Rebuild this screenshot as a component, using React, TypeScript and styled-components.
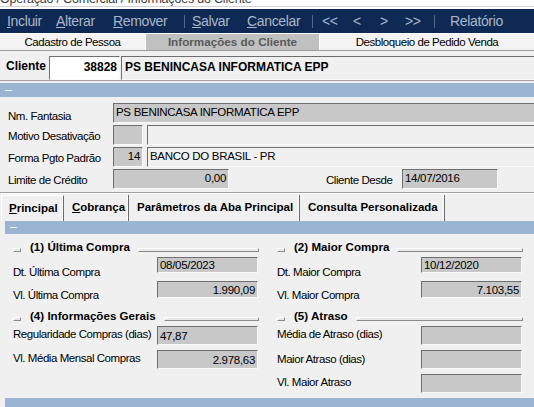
import React from 'react';
import styled, { createGlobalStyle } from 'styled-components';

const sans = `'Liberation Sans', Arial, sans-serif`;

const GlobalStyle = createGlobalStyle`
  html, body {
    margin: 0;
    padding: 0;
  }

  body {
    background: #f0f0f0;
    font-family: ${sans};
    color: #000;
  }

  * {
    box-sizing: border-box;
  }
`;

const Window = styled.div`
  width: 534px;
  height: 407px;
  overflow: hidden;
  display: flex;
  flex-direction: column;
  background: #f0f0f0;
`;

const TitleBar = styled.div`
  background: #fff;
  padding-bottom: 2px;
`;

const TitleText = styled.div`
  height: 7px;
  overflow: hidden;
  border-bottom: 1px solid #d4d4d4;

  span {
    display: block;
    margin-top: -8px;
    font-size: 12.5px;
    line-height: 14px;
    letter-spacing: -0.2px;
    color: #3c3c3c;
    white-space: nowrap;
  }
`;

const Toolbar = styled.div`
  height: 24px;
  flex-shrink: 0;
  display: flex;
  align-items: center;
  padding-left: 7px;
  background: #0e2a54;
`;

const ToolButton = styled.div<{ $w: number }>`
  width: ${(p) => p.$w}px;
  flex-shrink: 0;
  font-size: 14px;
  letter-spacing: -0.35px;
  line-height: 24px;
  color: #a9b6c9;
  white-space: nowrap;

  u {
    text-decoration-thickness: 1px;
    text-underline-offset: 1px;
  }
`;

const ToolSep = styled.div<{ $w: number }>`
  width: ${(p) => p.$w}px;
  flex-shrink: 0;
  height: 13px;

  &::before {
    content: '';
    display: block;
    width: 1px;
    height: 100%;
    background: #51668a;
  }
`;

const PageTabs = styled.div`
  display: flex;
  flex-shrink: 0;
  height: 18px;
  border-top: 1px solid #fff;
  border-bottom: 1px solid #9c9c9c;
  background: #f3f3f3;
`;

const PageTab = styled.div<{ $w: number; $active?: boolean }>`
  width: ${(p) => p.$w}px;
  flex-shrink: 0;
  text-align: center;
  white-space: nowrap;
  line-height: 16px;
  font-size: ${(p) => (p.$active ? '11.7px' : '11.5px')};
  letter-spacing: ${(p) => (p.$active ? '0' : '-0.45px')};
  font-weight: ${(p) => (p.$active ? 700 : 400)};
  color: ${(p) => (p.$active ? '#5a5a5a' : '#000')};
  background: ${(p) => (p.$active ? '#c0c0c0' : 'transparent')};
  border-left: ${(p) => (p.$active ? '1px solid #fff' : 'none')};
  border-right: ${(p) => (p.$active ? '1px solid #fff' : 'none')};
`;

const ClientRow = styled.div`
  display: flex;
  flex-shrink: 0;
  height: 30px;
  padding: 5px 0 0 6px;
  border-bottom: 1px solid #a0a0a0;
  margin-bottom: 2px;
  overflow: hidden;
`;

const ClientLabel = styled.div`
  width: 43px;
  font-weight: 700;
  font-size: 12px;
  line-height: 20px;
`;

const Field = styled.div<{
  $w?: number;
  $h?: number;
  $light?: boolean;
  $white?: boolean;
  $right?: boolean;
  $gap?: number;
}>`
  ${(p) => (p.$w ? `width: ${p.$w}px; flex-shrink: 0;` : 'flex: 1; margin-right: -3px;')}
  height: ${(p) => p.$h ?? 20}px;
  margin-left: ${(p) => p.$gap ?? 0}px;
  display: flex;
  align-items: center;
  justify-content: ${(p) => (p.$right ? 'flex-end' : 'flex-start')};
  padding: 0 2px;
  background: ${(p) => (p.$white ? '#fff' : p.$light ? '#f0f0f0' : '#c8c8c8')};
  border: 1px solid;
  border-color: #6e6e6e #fafafa #fafafa #6e6e6e;
  font-size: 11.5px;
  letter-spacing: -0.3px;
  white-space: nowrap;
  overflow: hidden;
`;

const BoldField = styled(Field)`
  font-weight: 700;
  font-size: 12px;
  letter-spacing: 0;
  padding: 0 2px 3px 3px;
`;

const FormField = styled(Field)`
  padding-bottom: 2px;
`;

const BlueBar = styled.div<{ $h: number }>`
  height: ${(p) => p.$h}px;
  flex-shrink: 0;
  background: #9bb4d2;
  color: #fff;
  font-size: 12px;
  line-height: ${(p) => p.$h}px;
  padding-left: 5px;
`;

const Form = styled.div`
  display: flex;
  flex-direction: column;
  gap: 2px;
  flex-shrink: 0;
  padding: 6px 0 3px 8px;
  border-bottom: 1px solid #a0a0a0;
  overflow: hidden;
`;

const FormRow = styled.div`
  display: flex;
  height: 20px;
`;

const Label = styled.div<{ $w: number; $dy: number; $gap?: number }>`
  width: ${(p) => p.$w}px;
  flex-shrink: 0;
  margin-left: ${(p) => p.$gap ?? 0}px;
  padding-top: ${(p) => p.$dy}px;
  font-size: 11.5px;
  letter-spacing: -0.45px;
  line-height: 16px;
  white-space: nowrap;
`;

const TabStrip = styled.div`
  display: flex;
  flex-shrink: 0;
  height: 28px;
  border-top: 1px solid #fff;
  padding-top: 1px;
`;

const Tab = styled.div<{ $w: number; $active?: boolean }>`
  width: ${(p) => p.$w}px;
  flex-shrink: 0;
  height: 26px;
  padding: 5px 0 0 ${(p) => (p.$active ? 7 : 8)}px;
  margin-left: ${(p) => (p.$active ? 1 : 0)}px;
  font-weight: 700;
  font-size: 11.5px;
  line-height: 14px;
  white-space: nowrap;
  border-right: 1px solid #6a6a6a;
  box-shadow: inset -1px 0 0 #fff;
  border-left: ${(p) => (p.$active ? '1px solid #fff' : 'none')};
  border-top: ${(p) => (p.$active ? '1px solid #fff' : 'none')};

  u {
    text-decoration-thickness: 1px;
    text-underline-offset: 1px;
  }
`;

const TabPage = styled.div`
  display: flex;
  flex-direction: column;
  padding-left: 5px;
`;

const Content = styled.div`
  height: 164px;
  padding: 6px 0 0 8px;
  display: grid;
  grid-template-columns: 246px 246px;
  column-gap: 18px;
  align-content: start;
`;

const Column = styled.div`
  display: flex;
  flex-direction: column;
`;

const Group = styled.div<{ $mb?: number }>`
  display: flex;
  flex-direction: column;
  margin-bottom: ${(p) => p.$mb ?? 0}px;
`;

const GroupHeader = styled.div`
  display: flex;
  height: 14px;
  margin-bottom: 3px;
`;

const HeaderLine = styled.div<{ $w?: number }>`
  ${(p) => (p.$w ? `width: ${p.$w}px; flex-shrink: 0;` : 'flex: 1;')}
  height: 4px;
  margin-top: 8px;
  background: #e8e8e8;
  border: 1px solid;
  border-color: #fff #8c8c8c #8c8c8c #fff;
`;

const GroupTitle = styled.div`
  padding: 0 8px 0 9px;
  font-weight: 700;
  font-size: 11.6px;
  line-height: 14px;
  white-space: nowrap;
`;

const GroupRow = styled.div`
  display: flex;
  align-items: flex-start;
  height: 24px;
`;

type Row = { label: string; value?: string; right?: boolean; h: number; dy: number };

const InfoGroup = ({ title, rows, mb }: { title: string; rows: Row[]; mb?: number }) => (
  <Group $mb={mb}>
    <GroupHeader>
      <HeaderLine $w={8} />
      <GroupTitle>{title}</GroupTitle>
      <HeaderLine />
    </GroupHeader>
    {rows.map((r) => (
      <GroupRow key={r.label}>
        <Label $w={144} $dy={r.dy}>
          {r.label}
        </Label>
        <Field $w={101} $h={r.h} $right={r.right}>
          {r.value}
        </Field>
      </GroupRow>
    ))}
  </Group>
);

const App = () => {
  return (
    <>
      <GlobalStyle />
      <Window>
        <TitleBar>
          <TitleText>
            <span>Operação / Comercial / Informações do Cliente</span>
          </TitleText>
        </TitleBar>

        <Toolbar>
          <ToolButton $w={49}>
            <u>I</u>ncluir
          </ToolButton>
          <ToolButton $w={57}>
            <u>A</u>lterar
          </ToolButton>
          <ToolButton $w={71}>
            <u>R</u>emover
          </ToolButton>
          <ToolSep $w={8} />
          <ToolButton $w={55}>
            <u>S</u>alvar
          </ToolButton>
          <ToolButton $w={65}>
            <u>C</u>ancelar
          </ToolButton>
          <ToolSep $w={10} />
          <ToolButton $w={31}>&lt;&lt;</ToolButton>
          <ToolButton $w={27}>&lt;</ToolButton>
          <ToolButton $w={25}>&gt;</ToolButton>
          <ToolButton $w={29}>&gt;&gt;</ToolButton>
          <ToolSep $w={16} />
          <ToolButton $w={70}>Relatório</ToolButton>
        </Toolbar>

        <PageTabs>
          <PageTab $w={145}>Cadastro de Pessoa</PageTab>
          <PageTab $w={175} $active>
            Informações do Cliente
          </PageTab>
          <PageTab $w={214}>Desbloqueio de Pedido Venda</PageTab>
        </PageTabs>

        <ClientRow>
          <ClientLabel>Cliente</ClientLabel>
          <BoldField $w={71} $h={24} $white $right>
            38828
          </BoldField>
          <BoldField $h={24} $light $gap={1}>
            PS BENINCASA INFORMATICA EPP
          </BoldField>
        </ClientRow>

        <BlueBar $h={14}>–</BlueBar>

        <Form>
          <FormRow>
            <Label $w={105} $dy={5}>
              Nm. Fantasia
            </Label>
            <FormField>PS BENINCASA INFORMATICA EPP</FormField>
          </FormRow>
          <FormRow>
            <Label $w={105} $dy={3}>
              Motivo Desativação
            </Label>
            <FormField $w={30} />
            <FormField $light $gap={4} />
          </FormRow>
          <FormRow>
            <Label $w={105} $dy={3}>
              Forma Pgto Padrão
            </Label>
            <FormField $w={30} $right>
              14
            </FormField>
            <FormField $light $gap={4}>
              BANCO DO BRASIL - PR
            </FormField>
          </FormRow>
          <FormRow>
            <Label $w={105} $dy={3}>
              Limite de Crédito
            </Label>
            <FormField $w={116} $right>
              0,00
            </FormField>
            <Label $w={76} $dy={3} $gap={97}>
              Cliente Desde
            </Label>
            <FormField $w={96}>14/07/2016</FormField>
          </FormRow>
        </Form>

        <TabStrip>
          <Tab $w={63} $active>
            <u>P</u>rincipal
          </Tab>
          <Tab $w={65}>
            <u>C</u>obrança
          </Tab>
          <Tab $w={171}>Parâmetros da Aba Principal</Tab>
          <Tab $w={145}>Consulta Personalizada</Tab>
        </TabStrip>

        <TabPage>
          <BlueBar $h={13}>–</BlueBar>
          <Content>
            <Column>
              <InfoGroup
                title="(1) Última Compra"
                mb={4}
                rows={[
                  { label: 'Dt. Última Compra', value: '08/05/2023', h: 16, dy: 7 },
                  { label: 'Vl. Última Compra', value: '1.990,09', right: true, h: 17, dy: 6 },
                ]}
              />
              <InfoGroup
                title="(4) Informações Gerais"
                rows={[
                  { label: 'Regularidade Compras (dias)', value: '47,87', h: 19, dy: 0 },
                  { label: 'Vl. Média Mensal Compras', value: '2.978,63', right: true, h: 19, dy: 0 },
                ]}
              />
            </Column>
            <Column>
              <InfoGroup
                title="(2) Maior Compra"
                mb={4}
                rows={[
                  { label: 'Dt. Maior Compra', value: '10/12/2020', h: 16, dy: 7 },
                  { label: 'Vl. Maior Compra', value: '7.103,55', right: true, h: 17, dy: 6 },
                ]}
              />
              <InfoGroup
                title="(5) Atraso"
                rows={[
                  { label: 'Média de Atraso (dias)', h: 19, dy: 0 },
                  { label: 'Maior Atraso (dias)', h: 19, dy: 1 },
                  { label: 'Vl. Maior Atraso', h: 19, dy: 0 },
                ]}
              />
            </Column>
          </Content>
          <BlueBar $h={12} />
        </TabPage>
      </Window>
    </>
  );
};

export default App;
